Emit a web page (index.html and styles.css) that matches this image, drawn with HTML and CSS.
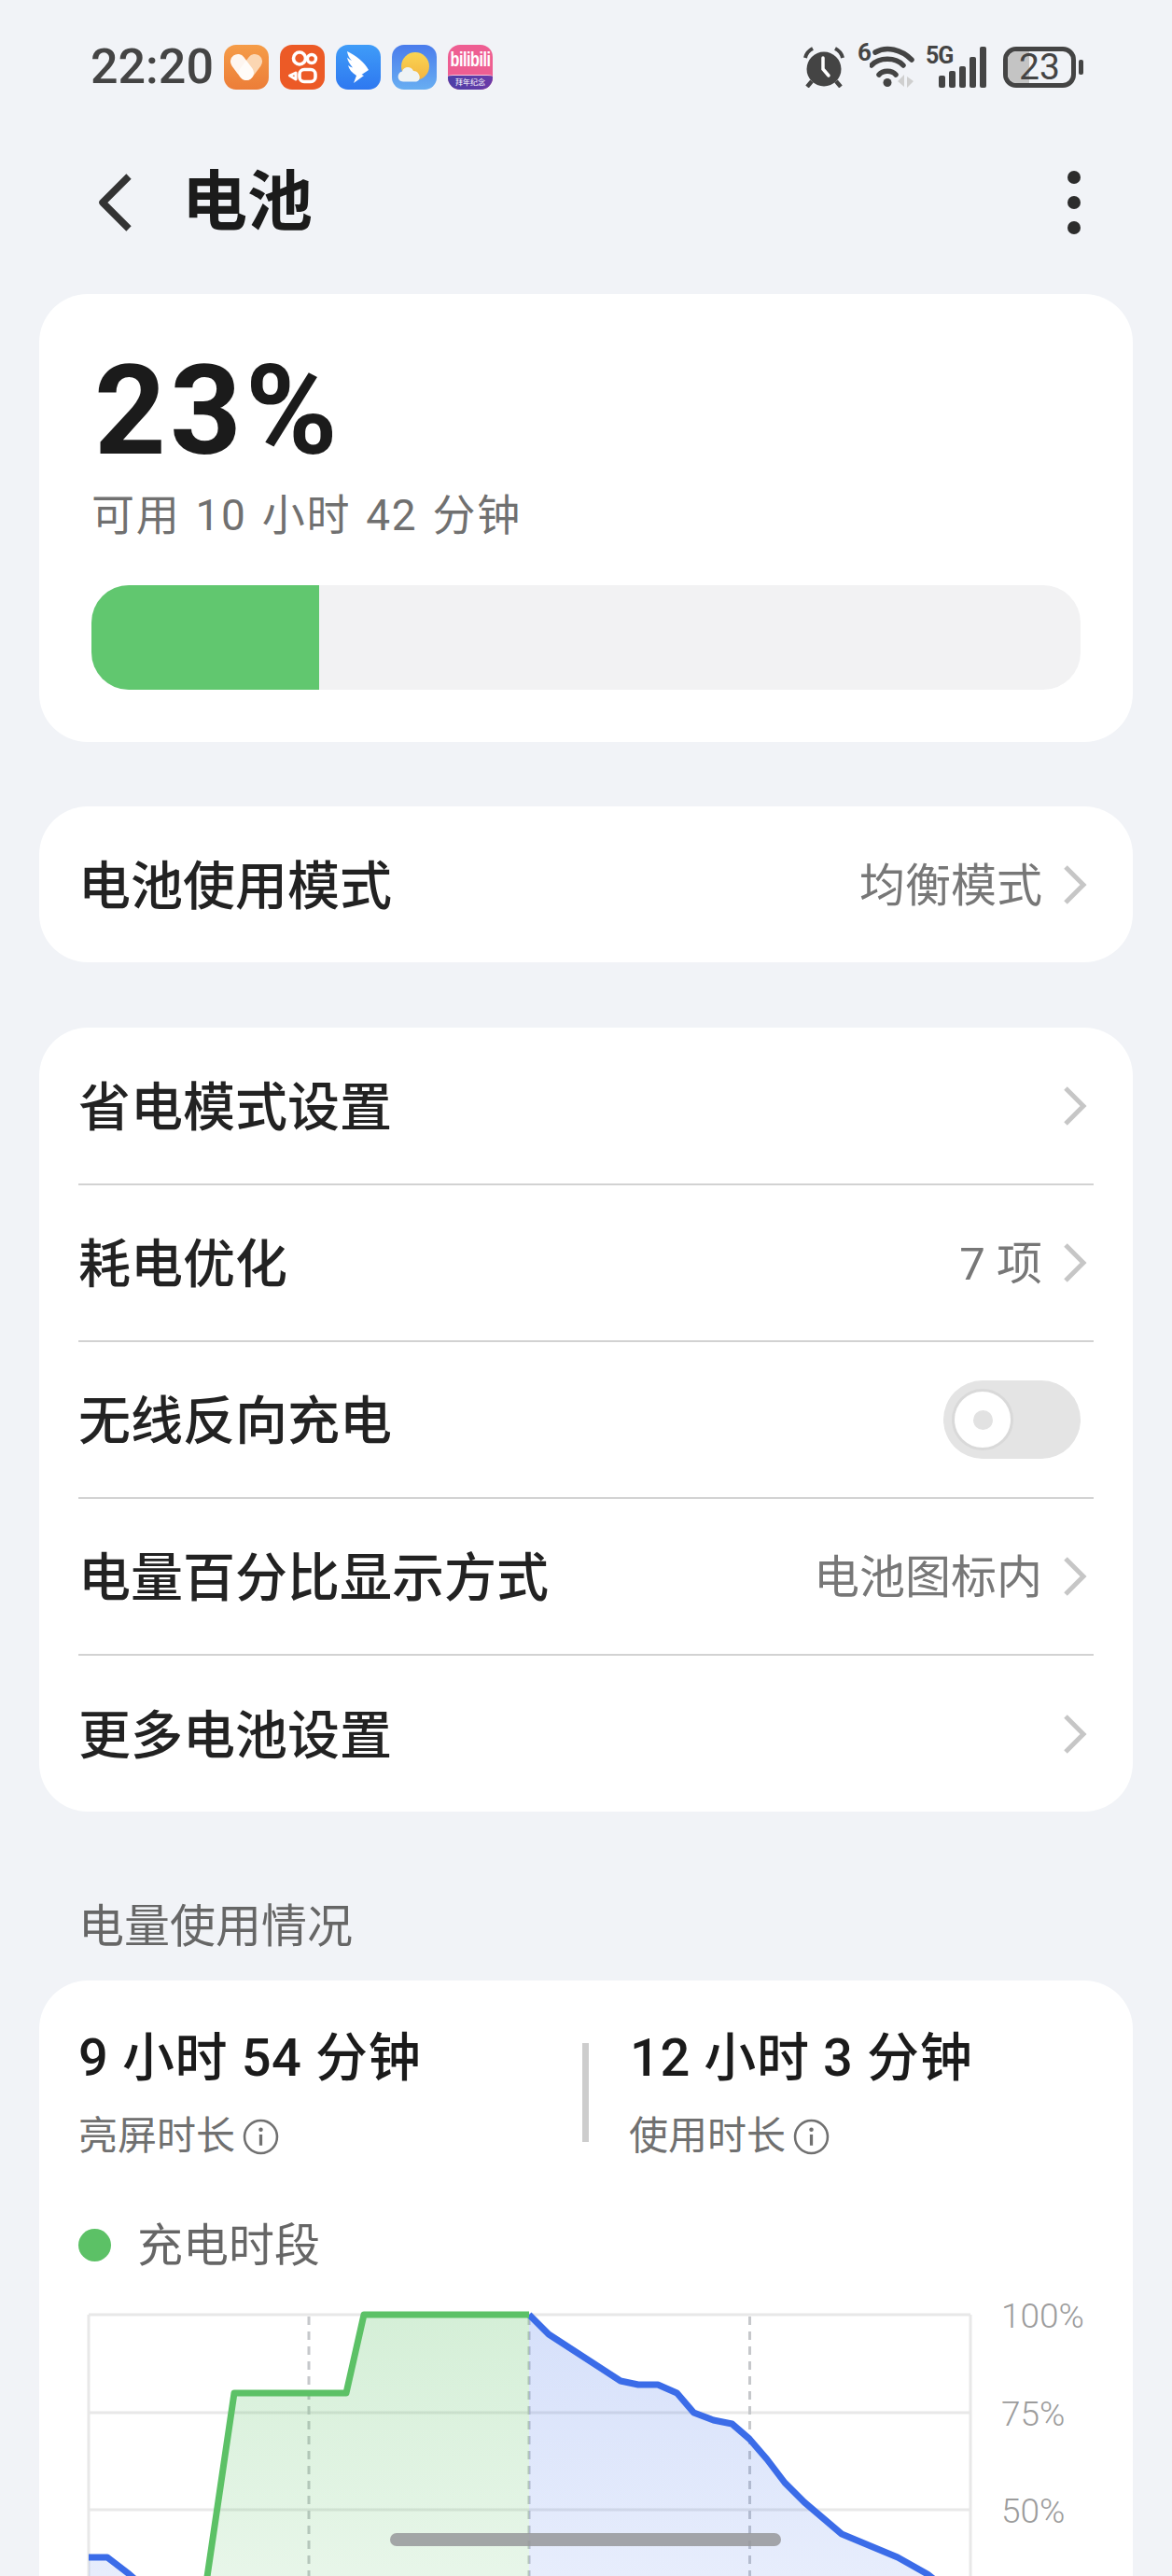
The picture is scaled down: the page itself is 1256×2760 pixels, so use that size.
FILE: index.html
```html
<!DOCTYPE html>
<html lang="zh">
<head>
  <meta charset="UTF-8">
  <meta name="viewport" content="width=device-width, initial-scale=1.0">
  <title>电池</title>
  <link rel="stylesheet" href="styles.css">
</head>
<body>

<div class="screen">
  <!-- status bar -->
  <div class="status-bar">
    <div class="status-left">
      <span class="time">22:20</span>
      <div class="app-icons">
        <svg class="app-icon" viewBox="0 0 48 48">
          <defs><linearGradient id="heartBg" x1="0" y1="0" x2="0" y2="1"><stop offset="0" stop-color="#f59c48"/><stop offset="1" stop-color="#ec7d38"/></linearGradient></defs>
          <rect width="48" height="48" rx="13" fill="url(#heartBg)"/>
          <path d="M33 18 L24 30" stroke="#fbd6b2" stroke-width="16" stroke-linecap="round"/>
          <path d="M15 18 L24 30" stroke="#fff" stroke-opacity="0.92" stroke-width="16" stroke-linecap="round"/>
        </svg>
        <svg class="app-icon" viewBox="0 0 48 48">
          <rect width="48" height="48" rx="13" fill="#ec5a26"/>
          <circle cx="21" cy="14.500" r="6.500" fill="none" stroke="#fff" stroke-width="3.600"/>
          <circle cx="34" cy="15" r="4.500" fill="none" stroke="#fff" stroke-width="3.400"/>
          <rect x="21" y="26.500" width="17" height="13" rx="5" fill="none" stroke="#fff" stroke-width="3.600"/>
          <path d="M17 30 L10.500 33 L17 37 Z" fill="none" stroke="#fff" stroke-width="3" stroke-linejoin="round"/>
        </svg>
        <svg class="app-icon" viewBox="0 0 48 48">
          <defs><linearGradient id="wingBg" x1="0" y1="0" x2="0" y2="1"><stop offset="0" stop-color="#3f9cf8"/><stop offset="1" stop-color="#2e78f0"/></linearGradient></defs>
          <rect width="48" height="48" rx="13" fill="url(#wingBg)"/>
          <path d="M12 7 C21 11 31 19 35 27 L27.500 32 L30 33 L19 41 L22 33 C17 30 14 26 13 22 C14.500 23 16 24 18 24.500 C15 21 12.500 17 12 13.500 C13.500 15 15 16 17 17 C14 14 12.500 10.500 12 7 Z" fill="#fff"/>
        </svg>
        <svg class="app-icon" viewBox="0 0 48 48">
          <defs>
            <linearGradient id="skyBg" x1="0" y1="0" x2="0" y2="1"><stop offset="0" stop-color="#4a7cec"/><stop offset="1" stop-color="#68aef2"/></linearGradient>
            <linearGradient id="sunFill" x1="0" y1="0" x2="0" y2="1"><stop offset="0" stop-color="#fad552"/><stop offset="1" stop-color="#f3b441"/></linearGradient>
          </defs>
          <rect width="48" height="48" rx="13" fill="url(#skyBg)"/>
          <circle cx="25" cy="23" r="15" fill="url(#sunFill)"/>
          <path d="M12 39.500 C5 39.500 5 29.500 11 28.500 C12.500 22.500 21 22.500 23 28 C30 27.500 33 39.500 25 39.500 Z" fill="#eef3f5"/>
        </svg>
        <div class="bili-icon">
          <span class="bili-name">bilibili</span>
          <span class="bili-tag">拜年纪念</span>
        </div>
      </div>
    </div>
    <div class="status-right">
      <svg class="alarm" width="44" height="44" viewBox="0 0 44 44">
        <circle cx="22" cy="24" r="18.500" fill="#444"/>
        <path d="M2 12 C3 7 6 4 10 2" fill="none" stroke="#444" stroke-width="4"/>
        <path d="M42 12 C41 7 38 4 34 2" fill="none" stroke="#444" stroke-width="4"/>
        <path d="M9 37 L4 43 M35 37 L40 43" stroke="#444" stroke-width="4.500"/>
        <path d="M21 12 L21 24 L27 31" fill="none" stroke="#fff" stroke-width="3.500" stroke-linecap="round"/>
      </svg>
      <div class="wifi">
        <span class="wifi-six">6</span>
        <svg width="60" height="46" viewBox="0 0 60 46">
          <path d="M6 7 C18 0 34 4 45 15" fill="none" stroke="#444" stroke-width="5.500" stroke-linecap="round"/>
          <path d="M2 21 C10 12 28 12 36 21" fill="none" stroke="#444" stroke-width="5.500" stroke-linecap="round"/>
          <path d="M10 31 C14 26 24 26 28 31" fill="none" stroke="#444" stroke-width="5.500" stroke-linecap="round"/>
          <circle cx="19" cy="39.500" r="4.500" fill="#444"/>
          <path d="M37 31 L37 44 L30 38 Z M40 33 L40 45 L47 38 Z" fill="#cfcfcf"/>
        </svg>
      </div>
      <div class="signal">
        <span class="five-g">5G</span>
        <div class="bars">
          <i class="bar-1"></i><i class="bar-2"></i><i class="bar-3"></i><i class="bar-4"></i><i class="bar-5"></i>
        </div>
      </div>
      <div class="battery">
        <div class="battery-body">
          <div class="battery-level"></div>
          <span class="battery-num">23</span>
        </div>
        <div class="battery-nub"></div>
      </div>
    </div>
  </div>

  <!-- title -->
  <div class="nav-bar">
    <svg class="back" width="44" height="70" viewBox="0 0 44 70">
      <path d="M36 7 L8 35 L36 63" fill="none" stroke="#333" stroke-width="7.500" stroke-linejoin="round"/>
    </svg>
    <h1 class="page-title">电池</h1>
    <div class="more"><i></i><i></i><i></i></div>
  </div>

  <!-- battery level -->
  <div class="card level-card">
    <div class="percent">23%</div>
    <div class="remain">可用 10 小时 42 分钟</div>
    <div class="level-track"><div class="level-fill"></div></div>
  </div>

  <div class="card mode-card">
    <div class="row">
      <span class="row-name">电池使用模式</span>
      <span class="row-value">均衡模式</span>
      <svg class="chevron" width="30" height="46" viewBox="0 0 30 46"><path d="M5 4 L24 23 L5 42" fill="none" stroke="#c6c6c6" stroke-width="5"/></svg>
    </div>
  </div>

  <div class="card">
    <div class="row">
      <span class="row-name">省电模式设置</span>
      <svg class="chevron" width="30" height="46" viewBox="0 0 30 46"><path d="M5 4 L24 23 L5 42" fill="none" stroke="#c6c6c6" stroke-width="5"/></svg>
    </div>
    <div class="row">
      <span class="row-name">耗电优化</span>
      <span class="row-value">7 项</span>
      <svg class="chevron" width="30" height="46" viewBox="0 0 30 46"><path d="M5 4 L24 23 L5 42" fill="none" stroke="#c6c6c6" stroke-width="5"/></svg>
    </div>
    <div class="row">
      <span class="row-name">无线反向充电</span>
      <div class="toggle"><div class="knob"><i></i></div></div>
    </div>
    <div class="row">
      <span class="row-name">电量百分比显示方式</span>
      <span class="row-value">电池图标内</span>
      <svg class="chevron" width="30" height="46" viewBox="0 0 30 46"><path d="M5 4 L24 23 L5 42" fill="none" stroke="#c6c6c6" stroke-width="5"/></svg>
    </div>
    <div class="row row-last">
      <span class="row-name">更多电池设置</span>
      <svg class="chevron" width="30" height="46" viewBox="0 0 30 46"><path d="M5 4 L24 23 L5 42" fill="none" stroke="#c6c6c6" stroke-width="5"/></svg>
    </div>
  </div>

  <div class="section-label">电量使用情况</div>

  <div class="card usage-card">
    <div class="usage-stats">
      <div class="stat">
        <div class="stat-value">9 小时 54 分钟</div>
        <div class="stat-label">亮屏时长
          <svg class="info" width="39" height="39" viewBox="0 0 38 38"><circle cx="19" cy="19" r="17" fill="none" stroke="#707070" stroke-width="2.500"/><circle cx="19" cy="11.500" r="2.200" fill="#707070"/><path d="M19 16.500 V28" stroke="#707070" stroke-width="3.200"/></svg>
        </div>
      </div>
      <div class="stat-split"></div>
      <div class="stat stat-second">
        <div class="stat-value">12 小时 3 分钟</div>
        <div class="stat-label">使用时长
          <svg class="info" width="39" height="39" viewBox="0 0 38 38"><circle cx="19" cy="19" r="17" fill="none" stroke="#707070" stroke-width="2.500"/><circle cx="19" cy="11.500" r="2.200" fill="#707070"/><path d="M19 16.500 V28" stroke="#707070" stroke-width="3.200"/></svg>
        </div>
      </div>
    </div>
    <div class="legend"><i class="legend-dot"></i><span>充电时段</span></div>

    <!-- chart coordinates: x from card left, y from 12 above the top gridline -->
    <svg class="chart" width="1172" height="340" viewBox="0 -20 1172 340">
      <defs>
        <linearGradient id="greenFill" gradientUnits="userSpaceOnUse" x1="0" y1="12" x2="0" y2="300">
          <stop offset="0" stop-color="#5cc166" stop-opacity="0.26"/>
          <stop offset="1" stop-color="#5cc166" stop-opacity="0.14"/>
        </linearGradient>
        <linearGradient id="blueFill" gradientUnits="userSpaceOnUse" x1="0" y1="12" x2="0" y2="300">
          <stop offset="0" stop-color="#3b6ce8" stop-opacity="0.21"/>
          <stop offset="1" stop-color="#3b6ce8" stop-opacity="0.12"/>
        </linearGradient>
      </defs>
      <g class="grid">
        <path d="M53 12 H998 M53 117 H998 M53 221 H998 M53 12 V320 M998 12 V320"/>
      </g>
      <g class="grid-dash">
        <path d="M289 14 V320 M525 14 V320 M761.500 14 V320"/>
      </g>
      <path d="M53 272 H73 L96.500 290 L130 320 H53 Z" fill="url(#blueFill)"/>
      <path d="M176 320 L209 96 H329 L348 12 H525 V320 Z" fill="url(#greenFill)"/>
      <path d="M525 12 L546 33 L623 83 L642 87 L663 87 L683.500 96 L701.500 117 L722.500 125 L742.500 129 L761 145 L780 167 L799 192 L820 213 L860 247 L920 272 L952 290 L990 320 H525 Z" fill="url(#blueFill)"/>
      <path d="M53 272 H73 L96.500 290 L130 320" class="line-blue"/>
      <path d="M525 12 L546 33 L623 83 L642 87 L663 87 L683.500 96 L701.500 117 L722.500 125 L742.500 129 L761 145 L780 167 L799 192 L820 213 L860 247 L920 272 L952 290 L990 320" class="line-blue"/>
      <path d="M176 320 L209 96 H329 L348 12 H525" class="line-green"/>
      <text class="axis-label" x="1031" y="13" dy="13">100%</text>
      <text class="axis-label" x="1031" y="118" dy="13">75%</text>
      <text class="axis-label" x="1031" y="222" dy="13">50%</text>
    </svg>
  </div>

  <div class="home-bar"></div>
</div>

</body>
</html>
```

FILE: styles.css
```css
html, body {
  margin: 0;
  padding: 0;
}

body {
  font-family: Roboto, 'Noto Sans CJK SC', sans-serif;
  background-color: #f1f3f7;
}

.screen {
  position: relative;
  height: 2760px;
  overflow: hidden;
}

/* status bar */
.status-bar {
  display: flex;
  justify-content: space-between;
  align-items: center;
  height: 48px;
  padding: 48px 95px 0 97px;
}

.status-left,
.status-right {
  display: flex;
  align-items: center;
}

.time {
  width: 143px;
  font-size: 52px;
  line-height: 48px;
  font-weight: 500;
  color: #444;
}

.app-icons {
  display: flex;
  gap: 12px;
}

.app-icon {
  width: 48px;
  height: 48px;
  display: block;
}

.bili-icon {
  width: 48px;
  height: 48px;
  border-radius: 13px;
  overflow: hidden;
  background-color: #ee5e92;
  display: flex;
  flex-direction: column;
}

.bili-name {
  height: 32px;
  font-family: 'Liberation Sans', sans-serif;
  font-size: 17px;
  line-height: 32px;
  font-weight: bold;
  letter-spacing: -0.5px;
  text-align: center;
  color: #fff;
  transform: scale(0.95, 1.3);
}

.bili-tag {
  flex: 1;
  font-size: 8px;
  line-height: 15px;
  text-align: center;
  color: #fff;
  white-space: nowrap;
  border-top: 1px solid #f7c5d8;
  border-radius: 6px 6px 0 0 / 2px 2px 0 0;
  background: linear-gradient(90deg, #4c3fa8, #6a3aa8);
}

.alarm {
  display: block;
  margin-right: 14px;
}

.wifi {
  position: relative;
  width: 73px;
  height: 46px;
  padding-left: 13px;
  box-sizing: border-box;
}

.wifi svg {
  display: block;
}

.wifi-six {
  position: absolute;
  left: 0;
  top: -8px;
  font-size: 26px;
  font-weight: bold;
  color: #444;
}

.signal {
  position: relative;
  width: 65px;
  height: 44px;
  margin-right: 18px;
}

.five-g {
  position: absolute;
  left: 0;
  top: -5px;
  font-size: 25px;
  font-weight: bold;
  letter-spacing: -1px;
  color: #444;
}

.bars {
  position: absolute;
  right: 0;
  bottom: 0;
  display: flex;
  align-items: flex-end;
  gap: 4px;
}

.bars i {
  display: block;
  width: 7px;
  background-color: #444;
  border-radius: 2px;
}

.bar-1 { height: 13px; }
.bar-2 { height: 18px; }
.bar-3 { height: 23px; }
.bar-4 { height: 33px; }
.bar-5 { height: 44px; }

.battery {
  display: flex;
  align-items: center;
  gap: 3px;
}

.battery-body {
  position: relative;
  width: 78px;
  height: 44px;
  box-sizing: border-box;
  border: 5px solid #444;
  border-radius: 14px;
  overflow: hidden;
  text-align: center;
}

.battery-level {
  position: absolute;
  left: 0;
  top: 0;
  bottom: 0;
  width: 23px;
  background-color: #c4c4c4;
}

.battery-num {
  position: relative;
  display: block;
  font-size: 39px;
  line-height: 34px;
  color: #444;
}

.battery-nub {
  width: 5px;
  height: 16px;
  border-radius: 2px;
  background-color: #444;
}

/* title */
.nav-bar {
  display: flex;
  align-items: center;
  height: 70px;
  margin: 86px 0 63px;
  padding: 0 98px 0 102px;
}

.back {
  display: block;
}

.page-title {
  flex: 1;
  margin: 0 0 0 49px;
  font-size: 70px;
  line-height: 70px;
  font-weight: 700;
  color: #1b1b1b;
}

.more {
  display: flex;
  flex-direction: column;
  gap: 13px;
}

.more i {
  display: block;
  width: 14px;
  height: 14px;
  border-radius: 50%;
  background-color: #2c2c2c;
}

/* cards */
.card {
  margin: 0 42px 72px;
  background-color: #fff;
  border-radius: 52px;
}

.level-card {
  height: 480px;
  margin-bottom: 69px;
  padding: 56px 56px 0;
  box-sizing: border-box;
}

.mode-card {
  margin-bottom: 70px;
}

.mode-card .row {
  height: 169px;
}

.percent {
  margin-left: 3px;
  font-size: 134px;
  line-height: 140px;
  font-weight: 700;
  letter-spacing: 4px;
  color: #1b1b1b;
}

.remain {
  margin-top: 11px;
  font-size: 46px;
  line-height: 60px;
  letter-spacing: 1.7px;
  word-spacing: 3px;
  color: #707070;
}

.level-track {
  height: 112px;
  margin-top: 45px;
  border-radius: 40px;
  background-color: #f2f2f3;
  overflow: hidden;
}

.level-fill {
  width: 244px;
  height: 100%;
  background-color: #61c76f;
}

.row {
  display: flex;
  align-items: center;
  height: 168px;
  margin: 0 42px;
  border-top: 2px solid #d2d2d2;
  box-sizing: border-box;
}

.row:first-child {
  height: 167px;
  border-top: none;
}

.row-last {
  height: 169px;
}

.row-name {
  flex: 1;
  padding-bottom: 7px;
  font-size: 56px;
  font-weight: 500;
  color: #222;
}

.row-value {
  padding-bottom: 7px;
  font-size: 49px;
  color: #777;
}

.chevron {
  display: block;
  margin: 0 5px 0 20px;
}

.toggle {
  position: relative;
  width: 147px;
  height: 84px;
  margin-right: 14px;
  border-radius: 42px;
  background-color: #e4e4e4;
}

.knob {
  position: absolute;
  left: 9px;
  top: 9px;
  width: 66px;
  height: 66px;
  box-sizing: border-box;
  border: 3px solid #d9d9d9;
  border-radius: 50%;
  background-color: #fff;
  display: flex;
  align-items: center;
  justify-content: center;
}

.knob i {
  display: block;
  width: 21px;
  height: 21px;
  border-radius: 50%;
  background-color: #e2e2e2;
}

.section-label {
  margin: 0 84px 22px;
  padding-top: 17px;
  font-size: 49px;
  line-height: 70px;
  color: #666;
}

/* usage card */
.usage-card {
  height: 800px;
  margin-bottom: 0;
  padding-top: 48px;
  box-sizing: border-box;
}

.usage-stats {
  display: flex;
  align-items: center;
  padding-left: 42px;
}

.stat {
  width: 540px;
}

.stat-second {
  margin-left: 43px;
  width: auto;
}

.stat-second .stat-value {
  margin-left: 1px;
}

.stat-value {
  font-size: 56px;
  line-height: 70px;
  font-weight: 500;
  letter-spacing: 0.6px;
  color: #1b1b1b;
}

.stat-label {
  display: flex;
  align-items: center;
  gap: 8px;
  margin-top: 24px;
  font-size: 42px;
  line-height: 50px;
  color: #707070;
}

.stat-split {
  flex: none;
  width: 7px;
  height: 106px;
  background-color: #cdcdcd;
}

.legend {
  display: flex;
  align-items: center;
  gap: 28px;
  margin: 58px 0 0 42px;
  font-size: 49px;
  line-height: 70px;
  color: #666;
}

.legend-dot {
  display: block;
  width: 35px;
  height: 35px;
  margin-bottom: 4px;
  border-radius: 50%;
  background-color: #5cc166;
}

.chart {
  display: block;
  margin-top: 6px;
}

.grid path {
  fill: none;
  stroke: #e8e8e8;
  stroke-width: 3;
}

.grid-dash path {
  fill: none;
  stroke: #c6c8cb;
  stroke-width: 3;
  stroke-dasharray: 9 7;
}

.line-blue,
.line-green {
  fill: none;
  stroke-width: 7;
  stroke-linejoin: round;
}

.line-blue {
  stroke: #3b6ce8;
}

.line-green {
  stroke: #5cc166;
}

.axis-label {
  font-size: 37px;
  font-weight: 300;
  fill: #9c9c9c;
}

.home-bar {
  position: absolute;
  left: 418px;
  top: 2714px;
  width: 419px;
  height: 14px;
  border-radius: 7px;
  background-color: rgba(150, 152, 154, 0.85);
}
```
